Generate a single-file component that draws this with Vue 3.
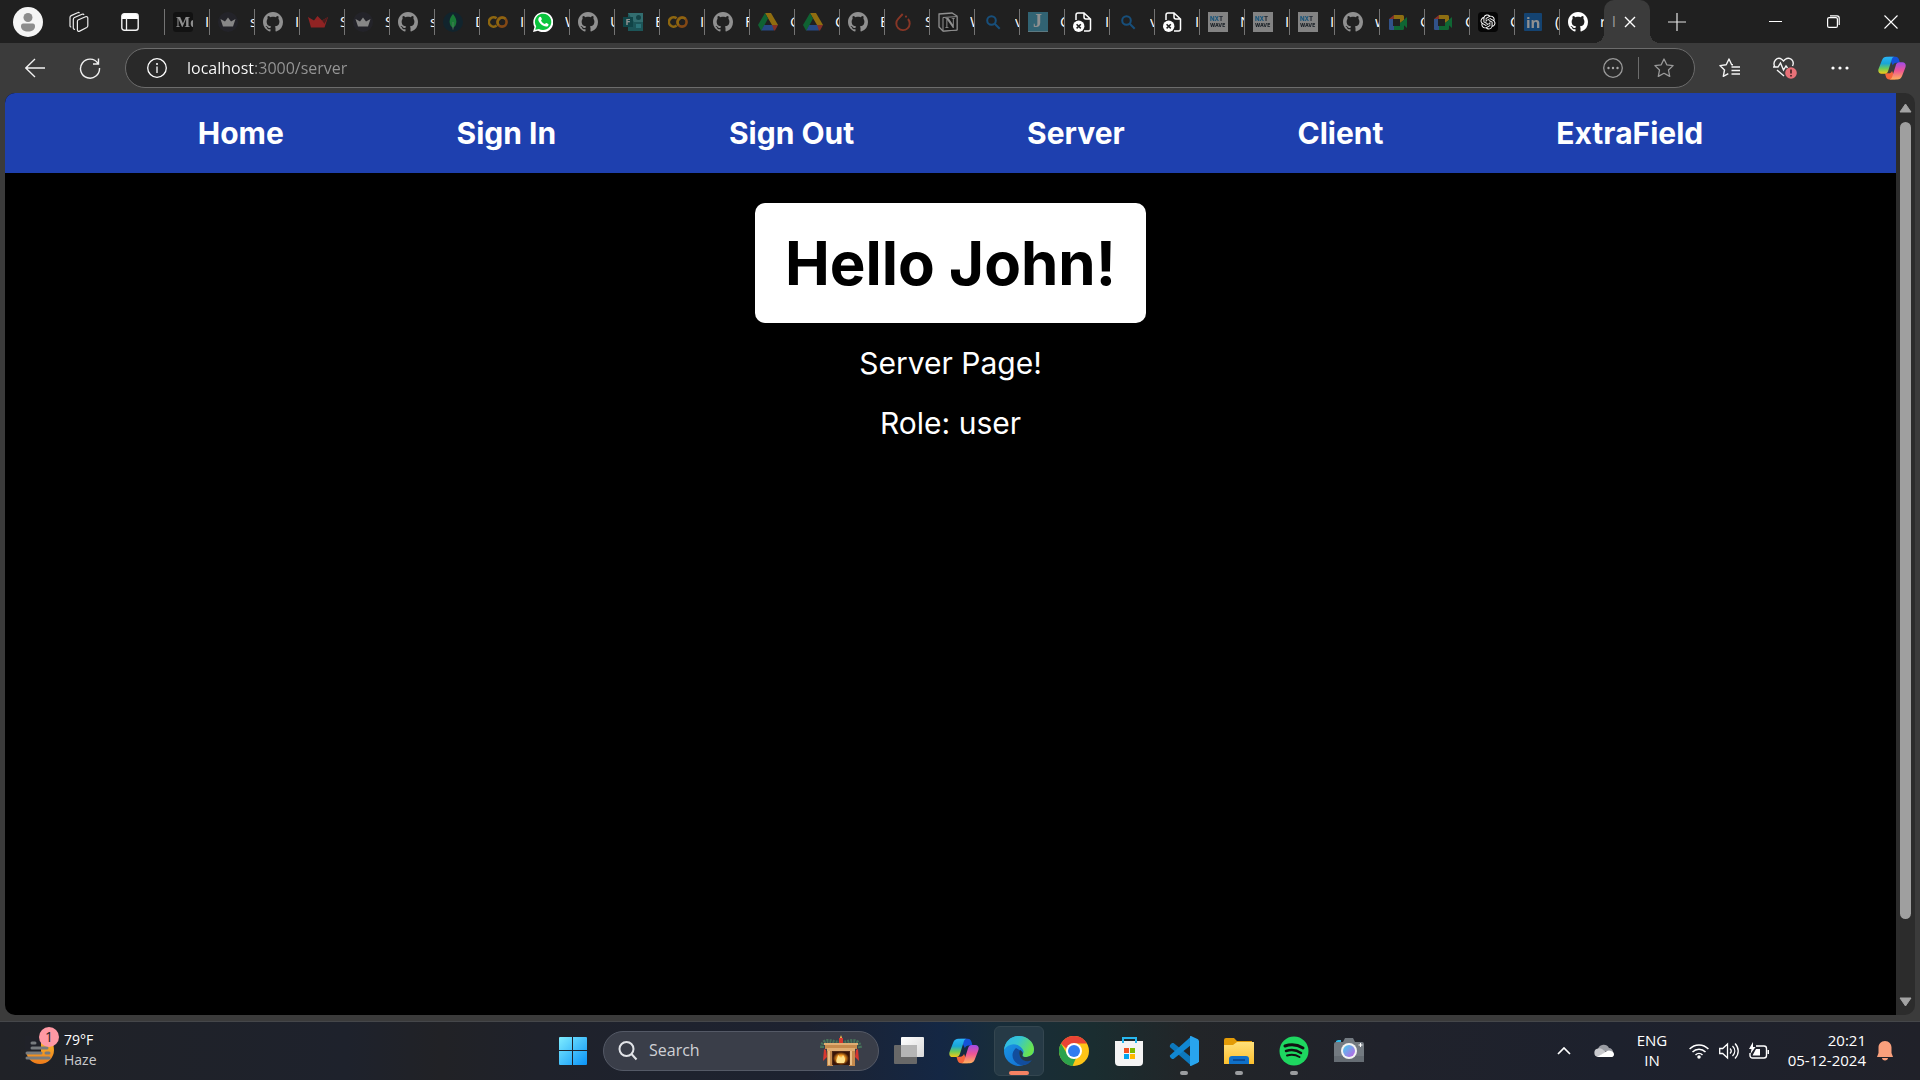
<script setup>
import { ref } from 'vue'

const tabs = [
  ['medium', 'Introduction'], ['crown', 'search'], ['github', 'Issues'], ['crown-red', 'Shop'],
  ['crown', 'Store'], ['github', 'server'], ['mongo', 'Data'], ['colab', 'Intro.ipynb'],
  ['whatsapp', 'WhatsApp'], ['github', 'User'], ['forms', 'Entry'], ['colab', 'Input.ipynb'],
  ['github', 'Forks'], ['drive', 'Google Drive'], ['drive', 'Course'], ['github', 'Explore'],
  ['pytorch', 'Start'], ['notion', 'Work'], ['lens', 'vue'], ['jay', 'Codes'],
  ['broken', 'Invalid'], ['lens', 'video'], ['broken', 'Invalid'], ['nxt', 'NxtWave'],
  ['nxt', 'Intro'], ['nxt', 'Intro'], ['github', 'web'], ['meet', 'Google Meet'],
  ['meet', 'Call'], ['openai', 'ChatGPT'], ['linkedin', '(1) LinkedIn'], ['github', 'repo']
].map(([icon, title], i) => ({ icon, title, awake: ['whatsapp', 'broken', 'openai'].includes(icon) || i === 31 }))

const links = ['Home', 'Sign In', 'Sign Out', 'Server', 'Client', 'ExtraField']

const apps = [
  { id: 'taskview', name: 'Task View' },
  { id: 'copilot', name: 'Copilot' },
  { id: 'edge', name: 'Microsoft Edge', active: true },
  { id: 'chrome', name: 'Google Chrome' },
  { id: 'store', name: 'Microsoft Store' },
  { id: 'vscode', name: 'Visual Studio Code', running: true },
  { id: 'folder', name: 'File Explorer', running: true },
  { id: 'spotify', name: 'Spotify', running: true },
  { id: 'camera', name: 'Camera' }
]

const address = ref('localhost:3000/server')
</script>

<template>
  <svg class="sprite" aria-hidden="true">
    <defs>
      <linearGradient id="g-win" x1="0" y1="0" x2="1" y2="1"><stop offset="0" stop-color="#7fedff" /><stop offset="1" stop-color="#0a93f7" /></linearGradient>
      <linearGradient id="g-cp1" x1="0" y1="0" x2="0" y2="1"><stop offset="0" stop-color="#2bb4f6" /><stop offset=".4" stop-color="#19a5d6" /><stop offset=".7" stop-color="#6ecb57" /><stop offset="1" stop-color="#f5c916" /></linearGradient>
      <linearGradient id="g-cp2" x1="0" y1="0" x2="0" y2="1"><stop offset="0" stop-color="#a04be8" /><stop offset=".5" stop-color="#ee5593" /><stop offset="1" stop-color="#ffb05c" /></linearGradient>
      <linearGradient id="g-edge1" x1="0" y1="0" x2="1" y2=".4"><stop offset="0" stop-color="#2fb5ea" /><stop offset=".5" stop-color="#35c5d2" /><stop offset="1" stop-color="#69e34f" /></linearGradient>
      <linearGradient id="g-edge2" x1="0" y1="0" x2="1" y2="1"><stop offset="0" stop-color="#1c9de6" /><stop offset="1" stop-color="#1065cf" /></linearGradient>
      <linearGradient id="g-task" x1="0" y1="0" x2="1" y2="1"><stop offset="0" stop-color="#fff" /><stop offset="1" stop-color="#d9d9d9" /></linearGradient>
      <linearGradient id="g-fold" x1="0" y1="0" x2="0" y2="1"><stop offset="0" stop-color="#ffe07a" /><stop offset="1" stop-color="#fdc02d" /></linearGradient>
      <linearGradient id="g-lens" x1="0" y1="0" x2="1" y2="1"><stop offset="0" stop-color="#42d0ef" /><stop offset="1" stop-color="#c35ee4" /></linearGradient>
      <linearGradient id="g-sun" x1="0" y1="0" x2="0" y2="1"><stop offset="0" stop-color="#fbc22d" /><stop offset="1" stop-color="#ee7b1b" /></linearGradient>
      <radialGradient id="g-fire"><stop offset="0" stop-color="#fff0a0" /><stop offset=".5" stop-color="#f79a20" /><stop offset="1" stop-color="#3a1507" /></radialGradient>
    </defs>

    <symbol id="github" viewBox="0 0 16 16"><path fill="#fff" d="M8 0C3.58 0 0 3.58 0 8c0 3.54 2.29 6.53 5.47 7.59.4.07.55-.17.55-.38 0-.19-.01-.82-.01-1.49-2.01.37-2.53-.49-2.69-.94-.09-.23-.48-.94-.82-1.13-.28-.15-.68-.52-.01-.53.63-.01 1.08.58 1.23.82.72 1.21 1.87.87 2.33.66.07-.52.28-.87.51-1.07-1.78-.2-3.64-.89-3.64-3.95 0-.87.31-1.59.82-2.15-.08-.2-.36-1.02.08-2.12 0 0 .67-.21 2.2.82.64-.18 1.32-.27 2-.27s1.36.09 2 .27c1.53-1.04 2.2-.82 2.2-.82.44 1.1.16 1.92.08 2.12.51.56.82 1.27.82 2.15 0 3.07-1.87 3.75-3.65 3.95.29.25.54.73.54 1.48 0 1.07-.01 1.93-.01 2.2 0 .21.15.46.55.38A8.01 8.01 0 0 0 16 8c0-4.42-3.58-8-8-8z" /></symbol>
    <symbol id="medium" viewBox="0 0 20 20"><rect width="20" height="20" rx="3" fill="#050505" /><text x="3" y="15" font-family="Liberation Serif, serif" font-weight="700" font-size="15" fill="#fff">Me</text></symbol>
    <symbol id="crown" viewBox="0 0 20 20"><circle cx="10" cy="10" r="10" fill="#272732" /><path fill="#eee" d="M2.500 7l4.500 2.500L10 5.500l3 4L17.500 7l-2.500 7.500H5z" /></symbol>
    <symbol id="crown-red" viewBox="0 0 20 20"><path fill="#ff2727" d="M0 5l6 3.500L9.500 4 14 8.500 20 5l-3.500 10.500H3z" /><path fill="#7a1c1c" d="M14 8.500L20 5l-3.500 7z" /></symbol>
    <symbol id="mongo" viewBox="0 0 20 20"><circle cx="10" cy="10" r="10" fill="#04283a" /><path fill="#13d14d" d="M10 2c1 1.500 3.400 4 3.400 7.500 0 3-1.400 5.200-3.400 6.500-2-1.300-3.400-3.500-3.400-6.500C6.600 6 9 3.500 10 2z" /><path stroke="#a8ddb9" stroke-width=".7" d="M10 10v7.500" /></symbol>
    <symbol id="colab" viewBox="0 0 20 20"><g fill="none" stroke-width="2.600"><path stroke="#f9ab00" d="M8.600 6.300a4.700 4.700 0 1 0 0 7.300" /><circle cx="14" cy="10" r="4.600" stroke="#e8710a" /><path stroke="#f9ab00" d="M10.600 13.200a4.700 4.700 0 0 1 6.800-6.400" /></g></symbol>
    <symbol id="whatsapp" viewBox="0 0 20 20"><path fill="#fff" d="M0 20l1.500-5A10 10 0 1 1 5 18.700z" /><path fill="#09c43c" d="M2.200 17.800l1-3.500a8.200 8.200 0 1 1 2.700 2.600z" /><path fill="#fff" d="M6.500 5c.7-.6 1.500-.2 1.700.4l.7 1.700c.1.500-.7 1.100-.9 1.500.9 1.800 2.100 2.900 3.900 3.500.5-.4.900-1.200 1.500-1.100l1.900.9c.6.500 0 2-1 2.500C10.700 15.600 5 10.500 5.300 7.300 5.400 6.300 5.800 5.500 6.500 5z" /></symbol>
    <symbol id="forms" viewBox="0 0 20 20"><path fill="#198b91" d="M5 1h15v18H5z" /><path fill="#44b9bd" d="M5 1h15v9H11z" /><circle cx="15.500" cy="5.500" r="2.500" fill="#09656b" /><path fill="#37c6d0" d="M13 12h5v4h-5z" /><rect y="5" width="10" height="10" fill="#02696e" /><text x="2.500" y="13.300" font-family="Open Sans, sans-serif" font-weight="700" font-size="9" fill="#fff">F</text></symbol>
    <symbol id="drive" viewBox="0 0 20 18"><path fill="#ffba00" d="M7 0h6l7 12h-6z" /><path fill="#00a344" d="M7 0l3 5.500L3.300 18 0 12z" /><path fill="#2c73e8" d="M3.300 17.500L6.300 12h10l-.5 5.500z" /><path fill="#e8412f" d="M14 12h6l-3 5.500h-1z" /></symbol>
    <symbol id="pytorch" viewBox="0 0 20 20"><path fill="none" stroke="#ee4c2c" stroke-width="1.900" d="M9.700 2L5.200 6.800a6.700 6.700 0 1 0 9.800.2" /><circle cx="13" cy="4.600" r="1.100" fill="#ee4c2c" /></symbol>
    <symbol id="notion" viewBox="0 0 20 20"><path fill="#222" stroke="#fff" stroke-width="1.300" d="M1 2l13-1 5 3v14l-14 1-4-4z" /><path fill="#111" stroke="#fff" stroke-width="1" d="M5 5.500l14-.9v13.500l-14 .9z" /><text x="7" y="16" font-family="Liberation Serif, serif" font-weight="700" font-size="14" fill="#fff">N</text></symbol>
    <symbol id="lens" viewBox="0 0 20 20"><g fill="none" stroke="#0f7ed6" stroke-width="2"><circle cx="8.500" cy="8.500" r="4.300" /><path d="M11.700 11.700l5 5" /></g></symbol>
    <symbol id="jay" viewBox="0 0 20 20"><rect width="20" height="20" fill="#42a6c5" /><path fill="#9ad2e2" d="M0 19h20v1H0z" /><text x="5" y="15" font-family="Liberation Serif, serif" font-weight="700" font-size="18" fill="#fff">J</text></symbol>
    <symbol id="broken" viewBox="0 0 20 20"><path fill="none" stroke="#fff" stroke-width="1.500" d="M3 8V3a2 2 0 0 1 2-2h6l6.500 6v10a2 2 0 0 1-2 2H11M11 1v4a2 2 0 0 0 2 2h4" /><circle cx="5.700" cy="14.300" r="5.700" fill="#fff" /><path stroke="#222" stroke-width="1.500" d="M3.600 12.200l4.200 4.200m0-4.200l-4.200 4.200" /></symbol>
    <symbol id="nxt" viewBox="0 0 20 20"><rect width="20" height="20" fill="#e6e6e6" /><g font-family="Inter, sans-serif" font-weight="800" font-size="6"><text x="2" y="9" fill="#168bd5">NX<tspan fill="#243246">T</tspan></text><text x="2" y="15" font-size="5" fill="#13202c">WAVE</text></g></symbol>
    <symbol id="meet" viewBox="0 0 20 20"><path fill="#ea4335" d="M1 7l5-4v4z" /><path fill="#4285f4" d="M1 7h4v7h5v4H2.500A1.500 1.500 0 0 1 1 16z" /><path fill="#fbbc04" d="M6 3h8.500A1.500 1.500 0 0 1 16 4.500V8l-4 3V7H6z" /><path fill="#00ac47" d="M6 14h6v-3l4-3v8.500a1.500 1.500 0 0 1-1.500 1.500H6zM13 10.500L19 5v11z" /></symbol>
    <symbol id="openai" viewBox="-4 -4 32 32"><rect x="-4" y="-4" width="32" height="32" rx="6" fill="#060606" /><path fill="#fff" d="M22.2819 9.8211a5.9847 5.9847 0 0 0-.5157-4.9108 6.0462 6.0462 0 0 0-6.5098-2.9A6.0651 6.0651 0 0 0 4.9807 4.1818a5.9847 5.9847 0 0 0-3.9977 2.9 6.0462 6.0462 0 0 0 .7427 7.0966 5.98 5.98 0 0 0 .511 4.9107 6.051 6.051 0 0 0 6.5146 2.9001A5.9847 5.9847 0 0 0 13.2599 24a6.0557 6.0557 0 0 0 5.7718-4.2058 5.9894 5.9894 0 0 0 3.9977-2.9001 6.0557 6.0557 0 0 0-.7475-7.0729zm-9.022 12.6081a4.4755 4.4755 0 0 1-2.8764-1.0408l.1419-.0804 4.7783-2.7582a.7948.7948 0 0 0 .3927-.6813v-6.7369l2.02 1.1686a.071.071 0 0 1 .038.052v5.5826a4.504 4.504 0 0 1-4.4945 4.4944zm-9.6607-4.1254a4.4708 4.4708 0 0 1-.5346-3.0137l.142.0852 4.783 2.7582a.7712.7712 0 0 0 .7806 0l5.8428-3.3685v2.3324a.0804.0804 0 0 1-.0332.0615L9.74 19.9502a4.4992 4.4992 0 0 1-6.1408-1.6464zM2.3408 7.8956a4.485 4.485 0 0 1 2.3655-1.9728V11.6a.7664.7664 0 0 0 .3879.6765l5.8144 3.3543-2.0201 1.1685a.0757.0757 0 0 1-.071 0l-4.8303-2.7865A4.504 4.504 0 0 1 2.3408 7.872zm16.5963 3.8558L13.1038 8.364 15.1192 7.2a.0757.0757 0 0 1 .071 0l4.8303 2.7913a4.4944 4.4944 0 0 1-.6765 8.1042v-5.6772a.79.79 0 0 0-.407-.667zm2.0107-3.0231l-.142-.0852-4.7735-2.7818a.7759.7759 0 0 0-.7854 0L9.409 9.2297V6.8974a.0662.0662 0 0 1 .0284-.0615l4.8303-2.7866a4.4992 4.4992 0 0 1 6.6802 4.66zM8.3065 12.863l-2.02-1.1638a.0804.0804 0 0 1-.038-.0567V6.0742a4.4992 4.4992 0 0 1 7.3757-3.4537l-.142.0805L8.704 5.459a.7948.7948 0 0 0-.3927.6813zm1.0976-2.3654l2.602-1.4998 2.6069 1.4998v2.9994l-2.5974 1.4997-2.6067-1.4997Z" /></symbol>
    <symbol id="linkedin" viewBox="0 0 20 20"><rect x="1" y="1" width="18" height="18" rx="1" fill="#0a66c2" /><text x="3" y="16" font-family="Open Sans, sans-serif" font-weight="700" font-size="15" fill="#fff">in</text></symbol>

    <symbol id="copilot" viewBox="0 0 32 32"><path fill="#1552d8" d="M12 3h8c2.500 0 3.500 1.500 4.200 4l.8 3h-4c-2 0-3.500 1-4 3z" /><path fill="#f4653b" d="M20 29h-7c-2.500 0-3.500-1.500-4.200-4L8 22h4c2 0 3.500-1 4-3z" /><path fill="url(#g-cp1)" d="M10 3h9c-2 0-2.800 1.500-3.300 3.200l-4 12.800c-.6 2-1.700 3.500-4.200 3.500H4C1 22.500-.3 20 .6 17L4.500 7C5.500 4.200 7.500 3 10 3z" /><path fill="url(#g-cp2)" d="M22 29h-9c2 0 2.800-1.500 3.300-3.200l4-12.800c.6-2 1.700-3.500 4.200-3.500H28c3 0 4.300 2.500 3.400 5.500L27.500 25c-1 2.800-3 4-5.500 4z" /></symbol>
    <symbol id="start" viewBox="0 0 30 30"><path fill="url(#g-win)" d="M2 1h12v13H1V2a1 1 0 0 1 1-1zm13 0h13a1 1 0 0 1 1 1v12H15zM1 15h13v14H2a1 1 0 0 1-1-1zm14 0h14v13a1 1 0 0 1-1 1H15z" /></symbol>
    <symbol id="taskview" viewBox="0 0 30 30"><rect y="9" width="23" height="19" rx="1" fill="#686868" /><rect x="7" y="1" width="23" height="20" rx="1" fill="url(#g-task)" /><path fill="#b5b5b5" d="M7 9h16v12H7z" /></symbol>
    <symbol id="edge" viewBox="0 0 30 30"><circle cx="15" cy="15" r="15" fill="url(#g-edge2)" /><path fill="#124d9d" d="M12 12c-7 6-3 17 7 17 4 0 7-2 9-5-5 2-10 1-12-3-1-2 0-5 1-6z" /><path fill="url(#g-edge1)" d="M0 14C1 5 7 0 15 0c8 0 15 6 15 13 0 5-3 8-8 8-2 0-4-1-3.500-2.500C20 17 20 15 18 12.500 13 6 4 7 0 14z" /><path fill="#263a46" d="M16 14c2.500 1.500 3.500 3 2.500 5-.8 2 4.500 3.500 9 0 2-1.500 3.500-4 3-2l-1 5.500c-.5 1-1.500 1.500-2.500 2-4 1.500-9 .5-11-3.500-1-2-1-5 0-7z" /></symbol>
    <symbol id="chrome" viewBox="0 0 30 30"><circle cx="15" cy="15" r="15" fill="#fdc417" /><path fill="#e94335" d="M2 7.500A15 15 0 0 1 28 7.500H15v12z" /><path fill="#2ca24c" d="M2 7.500L8.700 19c2 3 5 3.500 8.300 3L13.500 30A15 15 0 0 1 2 7.500z" /><circle cx="15" cy="15" r="8" fill="#fff" /><circle cx="15" cy="15" r="6" fill="#2f7cf0" /></symbol>
    <symbol id="store" viewBox="0 0 30 30"><path fill="#f4f4f4" d="M1 5h28v21a4 4 0 0 1-4 4H5a4 4 0 0 1-4-4z" /><path fill="none" stroke="#27b7ef" stroke-width="2" d="M9 7V2h13v5" /><path fill="#f25022" d="M10 12h5v5h-5z" /><path fill="#7fba00" d="M16 12h5v5h-5z" /><path fill="#00a4ef" d="M10 18h5v5h-5z" /><path fill="#ffb900" d="M16 18h5v5h-5z" /></symbol>
    <symbol id="vscode" viewBox="0 0 30 30"><path fill="#0d78bd" d="M1 9l2-2h1.500L22 21v8.500L.8 11z" /><path fill="#1187d2" d="M.8 19.500L22 .5V9L4.500 23H3l-2-2z" /><path fill="#28a4ee" d="M22 0l7 3.200 1 1.500v20.600l-1 1.500L22 30c-1 0-1-.5-1-1V1c0-.5 0-1 1-1z" /></symbol>
    <symbol id="folder" viewBox="0 0 30 30"><path fill="#e39b07" d="M0 4a2 2 0 0 1 2-2h8l3 3h15v10H0z" /><path fill="url(#g-fold)" d="M0 9h9l4-3h17v22H0z" /><path fill="#0f70c9" d="M5 28v-5a3 3 0 0 1 3-3h14a3 3 0 0 1 3 3v5z" /><path stroke="#083f86" stroke-width="1.500" d="M9 24h12" /></symbol>
    <symbol id="spotify" viewBox="0 0 30 30"><circle cx="15" cy="15" r="14.500" fill="#1ed760" /><g fill="none" stroke="#111" stroke-linecap="round"><path stroke-width="3" d="M6 10c6-2 13-1 18 2" /><path stroke-width="2.500" d="M7 15c5-1.500 11-.8 15 2" /><path stroke-width="2" d="M8 19.500c4-1.200 9-.7 12.500 1.500" /></g></symbol>
    <symbol id="camera" viewBox="0 0 30 30"><path fill="#2cb8e8" d="M2 7V5l2-1h3v3z" /><path fill="#737a81" d="M0 8a2 2 0 0 1 2-2h7l2-4h8l2 4h7a2 2 0 0 1 2 2v18H0z" /><path fill="#596067" d="M0 20h30v6H0z" opacity=".5" /><circle cx="15" cy="15" r="8" fill="#f3f3f3" /><circle cx="15" cy="15" r="6" fill="url(#g-lens)" /><path stroke="#fff" stroke-width="1" d="M26.500 7v4m-2-2h4" /></symbol>
  </svg>

  <div class="screen">
    <header class="tabstrip">
      <div class="strip-tools">
        <button class="tool" aria-label="Profile"><svg width="30" height="30" viewBox="0 0 30 30"><circle cx="15" cy="15" r="15" fill="#f5f5f5" /><circle cx="15" cy="10.500" r="4.500" fill="#8c8c8c" /><path fill="#8c8c8c" d="M8 19.500c0-3 1.500-3 3-3h8c1.500 0 3 0 3 3s-3 5-7 5-7-2-7-5z" /></svg></button>
        <button class="tool" aria-label="Workspaces"><svg width="22" height="22" viewBox="0 0 22 22" fill="none" stroke="#ececec" stroke-width="1.200" stroke-linejoin="round"><path d="M11 9l7.500-3.200c1.200-.5 2.300.1 2.300 1.300v7.600c0 .8-.4 1.400-1.100 1.800l-7 3.600c-1.200.6-2.300 0-2.300-1.300v-8.300c0-.7 0-1.200.6-1.500zM8 18.300c-1 .2-1.700-.4-1.700-1.400V8.500c0-.9.400-1.600 1.200-2L15 3.200c.9-.4 1.700 0 2 .7M4.300 16c-.8 0-1.300-.5-1.300-1.300V6.500c0-.9.400-1.500 1.200-1.900l6.300-2.900c.8-.4 1.600-.1 2 .5" /></svg></button>
        <button class="tool" aria-label="Tab actions"><svg width="18" height="18" viewBox="0 0 18 18"><rect x=".8" y=".8" width="16.400" height="16.400" rx="2.500" fill="none" stroke="#f2f2f2" stroke-width="1.400" /><path fill="#fff" d="M1 2.500L2.500 1h13L17 2.500V6H1z" /><path stroke="#f2f2f2" stroke-width="1.300" d="M5.500 5v12" /></svg></button>
      </div>
      <button v-for="(tab, i) in tabs" :key="i" class="tab" :class="{ awake: tab.awake }" :aria-label="tab.title">
        <svg class="favicon"><use :href="'#' + tab.icon" /></svg>
        <span class="tab-title">{{ tab.title[0] }}</span>
      </button>
      <div class="tab-active">
        <span class="tab-title current">l</span>
        <button class="close-tab" aria-label="Close tab"><svg width="12" height="12" viewBox="0 0 12 12" stroke="#fff" stroke-width="1.400"><path d="M1 1l10 10M11 1L1 11" /></svg></button>
      </div>
      <button class="new-tab" aria-label="New tab"><svg width="18" height="18" viewBox="0 0 18 18" stroke="#e4e4e4" stroke-width="1.200"><path d="M9 0v18M0 9h18" /></svg></button>
      <div class="window-controls">
        <button aria-label="Minimize"><svg width="13" height="13" viewBox="0 0 13 13" stroke="#fff"><path d="M0 6.500h13" /></svg></button>
        <button aria-label="Restore"><svg width="13" height="13" viewBox="0 0 13 13" fill="none" stroke="#fff" stroke-width="1.200"><rect x=".6" y="2.600" width="9.800" height="9.800" rx="1.500" /><path d="M3 .8h7a2.200 2.200 0 0 1 2.200 2.200v7" /></svg></button>
        <button aria-label="Close"><svg width="14" height="14" viewBox="0 0 14 14" stroke="#fff" stroke-width="1.100"><path d="M.5.5l13 13M13.500.5l-13 13" /></svg></button>
      </div>
    </header>

    <div class="toolbar">
      <button class="bar-button" aria-label="Back"><svg width="20" height="20" viewBox="0 0 20 20" fill="none" stroke="#f2f2f2" stroke-width="1.300"><path d="M20 10H.8M10 1L.8 10l9.200 9" /></svg></button>
      <button class="bar-button" aria-label="Refresh"><svg width="22" height="22" viewBox="0 0 22 22" fill="none" stroke="#f2f2f2" stroke-width="1.400"><path d="M19 6.500A9.500 9.500 0 1 0 20.500 11M19.500 1.500v5.500H14" /></svg></button>
      <div class="address">
        <button class="in-address" aria-label="View site information"><svg width="20" height="20" viewBox="0 0 20 20"><circle cx="10" cy="10" r="9.300" fill="none" stroke="#fff" stroke-width="1.300" /><path stroke="#fff" stroke-width="1.300" d="M10 8.500V15" /><circle cx="10" cy="6" r="1" fill="#fff" /></svg></button>
        <input v-model="address" class="url" type="text" aria-label="Address" spellcheck="false" />
        <button class="in-address" aria-label="More"><svg width="20" height="20" viewBox="0 0 20 20"><circle cx="10" cy="10" r="9.300" fill="none" stroke="#9a9a9a" stroke-width="1.300" /><g fill="#aaa"><circle cx="5.500" cy="10" r="1.200" /><circle cx="10" cy="10" r="1.200" /><circle cx="14.500" cy="10" r="1.200" /></g></svg></button>
        <span class="divider"></span>
        <button class="in-address" aria-label="Add to favourites"><svg width="20" height="20" viewBox="0 0 20 20" fill="none" stroke="#9a9a9a" stroke-width="1.300" stroke-linejoin="round"><path d="M10 1l2.800 5.800 6.300.8-4.600 4.400 1.200 6.400L10 15.300l-5.700 3.100L5.500 12 .9 7.600l6.300-.8z" /></svg></button>
      </div>
      <button class="bar-button" aria-label="Favourites"><svg width="21" height="20" viewBox="0 0 21 20" fill="none" stroke="#f4f4f4" stroke-width="1.400" stroke-linejoin="round"><path d="M14 6.800h-1.300L10 1 7.200 6.800.9 7.600 5.500 12l-1.200 6.400 5-2.700M12.500 9H21M12.500 12.500H21M12.500 16H21" /></svg></button>
      <button class="bar-button" aria-label="Browser essentials"><svg width="24" height="22" viewBox="0 0 24 22"><path fill="none" stroke="#f4f4f4" stroke-width="1.400" d="M2 10C-1 5 4-1 9 2.500l1.500 1.500L12 2.500C17-1 22 4 19.500 9M0 10h5l2.500-4 3 7L13 9l1.500 2M4 13l7 6" /><circle cx="18" cy="16" r="5.800" fill="#e87178" /><path stroke="#3b1e20" stroke-width="1.600" d="M18 12.500v4M18 18v1.500" /></svg></button>
      <button class="bar-button" aria-label="Settings and more"><svg width="18" height="4" viewBox="0 0 18 4" fill="#fff"><circle cx="2" cy="2" r="1.600" /><circle cx="9" cy="2" r="1.600" /><circle cx="16" cy="2" r="1.600" /></svg></button>
      <button class="bar-button copilot" aria-label="Copilot"><svg width="28" height="28"><use href="#copilot" /></svg></button>
    </div>

    <div class="viewport">
      <div class="page">
        <nav class="nav"><a v-for="link in links" :key="link" href="#">{{ link }}</a></nav>
        <main class="content">
          <h1>Hello John!</h1>
          <p>Server Page!</p>
          <p>Role: user</p>
        </main>
      </div>
      <div class="scrollbar" aria-hidden="true">
        <svg width="13" height="10" viewBox="0 0 13 10"><path fill="#a3a3a3" stroke="#a3a3a3" stroke-linejoin="round" d="M6.500 1L12 9H1z" /></svg>
        <div class="track"><div class="thumb"></div></div>
        <svg width="13" height="10" viewBox="0 0 13 10"><path fill="#a3a3a3" stroke="#a3a3a3" stroke-linejoin="round" d="M6.500 9L12 1H1z" /></svg>
      </div>
    </div>

    <footer class="taskbar">
      <button class="weather">
        <span class="weather-icon">
          <svg width="30" height="30" viewBox="0 0 30 30"><circle cx="15" cy="14" r="14" fill="url(#g-sun)" /><path fill="#202229" d="M0 0h16v16H0z" /><g stroke="#777b7e" stroke-width="3" stroke-linecap="round"><path d="M7 7h3M7 12h15M2 17h14M21 17h3M2 22h22" /></g></svg>
          <span class="badge">1</span>
        </span>
        <span class="weather-text"><span>79°F</span><span class="muted">Haze</span></span>
      </button>

      <div class="apps">
        <button class="app" aria-label="Start"><svg class="app-icon"><use href="#start" /></svg></button>
        <label class="search">
          <svg width="20" height="20" viewBox="0 0 20 20" fill="none" stroke="#e2e4e8" stroke-width="2"><circle cx="8.500" cy="8" r="7" /><path d="M13.500 13l5 5.500" /></svg>
          <input type="search" placeholder="Search" aria-label="Search" />
          <svg width="42" height="32" viewBox="0 0 42 32">
            <path fill="none" stroke="#47735b" stroke-width="4" stroke-dasharray="2 1" d="M2 13C2 5 8 5 14 7c5 1 9 1 13 0 6-2 12-2 13 6" />
            <path fill="#c58a4d" d="M5 10h32v4H5zM7 12h6v19H7zM29 12h6v19h-6z" /><path fill="#e0ad72" d="M4 8h34v2H4zM7 13h28v3H7z" /><path fill="#e9bd85" d="M8 16h2v14H8zM30 16h2v14h-2z" />
            <path fill="#4d2a18" d="M12 16h18v14H12z" /><path fill="url(#g-fire)" d="M13 17h16v13H13z" /><path fill="#ffe08a" d="M17 28c-2-3 1-5 1-8 3 2 2 4 3 4 1-1 1-3 2-4 2 3 3 5 1 8z" />
            <path fill="#d7372f" d="M19 3h4v5h-4zM4 14l2 1 1 7-4 4zM38 14l-2 1-1 7 4 4z" /><path fill="#ffc14d" d="M21 0l1 3h-2z" />
          </svg>
        </label>
        <button v-for="app in apps" :key="app.id" class="app" :class="{ active: app.active, running: app.running }" :aria-label="app.name">
          <svg class="app-icon"><use :href="'#' + app.id" /></svg>
        </button>
      </div>

      <div class="tray">
        <button class="tray-item chevron" aria-label="Show hidden icons"><svg width="14" height="8" viewBox="0 0 14 8" fill="none" stroke="#fff" stroke-width="1.700"><path d="M1 7l6-6 6 6" /></svg></button>
        <button class="tray-item cloud" aria-label="OneDrive"><svg width="20" height="14" viewBox="0 0 20 14"><path fill="#9a9ca3" d="M4 5a6 6 0 0 1 11-1c2 0 4 2 4 4l-9-1z" /><path fill="#c8c9cd" d="M4 4.500a4.500 4.500 0 0 1 4 .5l4 3-8 5A4.300 4.300 0 0 1 4 4.500z" /><path fill="#fff" d="M3 13l10-6a4 4 0 0 1 4 0c4 1 4 6 0 6H4z" /></svg></button>
        <button class="tray-item language"><span>ENG</span><span>IN</span></button>
        <button class="tray-item status" aria-label="Network, volume and battery">
          <svg width="20" height="16" viewBox="0 0 20 16" fill="none" stroke="#fff" stroke-width="1.500"><path d="M.6 6a13 13 0 0 1 18.800 0M3.500 9a9 9 0 0 1 13 0M6.500 12a5 5 0 0 1 7 0" /><circle cx="10" cy="14" r="1" fill="#fff" /></svg>
          <svg width="20" height="18" viewBox="0 0 20 18" fill="none" stroke="#fff" stroke-width="1.300"><path d="M.7 6.500h3L8.500 2v14l-4.800-4.500h-3zM11 6.500c1.500 1.500 1.500 3.500 0 5M13.500 4c3 3 3 7 0 10M16 1.500c4.300 4.500 4.300 10.500 0 15" /></svg>
          <svg width="20" height="18" viewBox="0 0 20 18"><path fill="none" stroke="#fff" stroke-width="1.400" d="M7 4h8a2.500 2.500 0 0 1 2.500 2.500v7A2.500 2.500 0 0 1 15 16H3.500A2.500 2.500 0 0 1 1 13.500V11" /><path fill="#fff" d="M18.500 8H20v4h-1.500zM7 7h4v6.500H3.500zM4 0L0 7h2.500L1.500 12 6.500 5H4z" /></svg>
        </button>
        <button class="tray-item clock"><span>20:21</span><span>05-12-2024</span></button>
        <button class="tray-item bell" aria-label="Notifications"><svg width="16" height="20" viewBox="0 0 16 20" fill="#f9a07c"><path d="M8 0c4 0 6.500 3 6.500 6.500V12l1.500 4H0l1.500-4V6.500C1.500 3 4 0 8 0zM5 17h6c0 1.500-1.500 2.500-3 2.500S5 18.500 5 17z" /></svg></button>
      </div>
    </footer>
  </div>
</template>

<style>
body {
  background: #3b3b3b;
}
</style>

<style scoped>
.sprite {
  position: absolute;
  width: 0;
  height: 0;
}

.screen {
  display: flex;
  flex-direction: column;
  min-height: 100vh;
  background: #3b3b3b;
  color: #fff;
  font-family: "Open Sans", "Noto Sans", sans-serif;
}

button {
  display: flex;
  align-items: center;
  justify-content: center;
  margin: 0;
  padding: 0;
  border: 0;
  background: none;
  color: inherit;
  font: inherit;
}

svg {
  flex: none;
  display: block;
}

/* Tab strip */
.tabstrip {
  display: flex;
  align-items: center;
  height: 43px;
  background: #202020;
}

.strip-tools {
  display: grid;
  grid-template-columns: 56px 44px 60px;
  padding-right: 4px;
}

.tab {
  flex: none;
  width: 45px;
  height: 26px;
  justify-content: flex-start;
  padding-left: 8px;
  border-left: 1px solid #747474;
}

.favicon {
  width: 20px;
  height: 20px;
  opacity: 0.5;
}

.awake .favicon {
  opacity: 1;
}

.tab-title {
  width: 4px;
  margin-left: 12px;
  padding-bottom: 2px;
  overflow: hidden;
  font-size: 15px;
  line-height: 20px;
  text-align: left;
}

.tab-active {
  position: relative;
  display: flex;
  align-items: center;
  justify-content: space-between;
  width: 46px;
  height: 43px;
  padding: 0 14px 0 8px;
  box-sizing: border-box;
  border-radius: 10px 10px 0 0;
  background: #3b3b3b;
}

.tab-active::before,
.tab-active::after {
  content: "";
  position: absolute;
  bottom: 0;
  width: 10px;
  height: 10px;
}

.tab-active::before {
  right: 100%;
  background: radial-gradient(circle at 0 0, transparent 10px, #3b3b3b 10px);
}

.tab-active::after {
  left: 100%;
  background: radial-gradient(circle at 100% 0, transparent 10px, #3b3b3b 10px);
}

.current {
  margin: 0;
  color: #9a9a9a;
}

.new-tab {
  width: 54px;
  height: 43px;
}

.window-controls {
  display: flex;
  margin-left: auto;
}

.window-controls button {
  width: 58px;
  height: 43px;
}

/* Toolbar */
.toolbar {
  display: flex;
  align-items: center;
  height: 50px;
  padding: 0 3px 0 7px;
}

.bar-button {
  width: 55px;
  height: 40px;
}

.copilot {
  width: 50px;
}

.address {
  display: flex;
  flex: 1;
  align-items: center;
  height: 40px;
  margin: 0 7px 0 8px;
  padding: 0 10px 0 11px;
  box-sizing: border-box;
  border: 1px solid #6c6c6c;
  border-radius: 20px;
  background: #292929;
}

.in-address {
  width: 40px;
  height: 36px;
}

.url {
  flex: 1;
  min-width: 0;
  height: 36px;
  margin: 0 10px 0 0;
  padding: 0 0 1px 10px;
  border: 0;
  outline: 0;
  background: linear-gradient(to right, #fff 77px, #969696 77px);
  background-clip: text;
  -webkit-text-fill-color: transparent;
  color: #fff;
  font: 16px "Open Sans", "Noto Sans", sans-serif;
}

.divider {
  width: 1px;
  height: 22px;
  margin: 0 5px;
  background: #6c6c6c;
}

/* Page */
.viewport {
  display: flex;
  flex: 1;
  margin: 0 5px 6px;
  border-radius: 10px;
  overflow: hidden;
}

.page {
  flex: 1;
  background: #000;
  font-family: Inter, sans-serif;
  font-size: 30px;
  line-height: 40px;
}

.nav {
  display: flex;
  justify-content: space-evenly;
  padding: 20px;
  background: #1e40af;
}

.nav a {
  color: #fff;
  font-weight: 700;
  text-decoration: none;
}

.content {
  display: flex;
  flex-direction: column;
  align-items: center;
  gap: 20px;
  padding: 30px;
}

.content h1 {
  margin: 0;
  padding: 30px;
  border-radius: 10px;
  background: #fff;
  color: #000;
  font-size: 60px;
  font-weight: 700;
  line-height: 60px;
}

.content p {
  margin: 0;
}

.scrollbar {
  display: flex;
  flex-direction: column;
  align-items: center;
  width: 19px;
  padding: 10px 0 8px;
  box-sizing: border-box;
  background: #2c2c2c;
}

.track {
  flex: 1;
  width: 11px;
  padding: 9px 0;
}

.thumb {
  height: 92%;
  border-radius: 6px;
  background: #9f9f9f;
}

/* Taskbar */
.taskbar {
  display: grid;
  grid-template-columns: 1fr auto 1fr;
  align-items: center;
  height: 59px;
  border-top: 1px solid #45474a;
  box-sizing: border-box;
  background: linear-gradient(to right, #202227, #1e222c 18%, #212226 23%, #1f222b 28%, #1d2230 42%, #142744 49%, #182d3a 52%, #1a2d30 57%, #222528 62%, #20222b 72%, #1d212d 84%, #202129);
}

.weather {
  justify-self: start;
  gap: 9px;
  padding-left: 25px;
}

.weather-icon {
  position: relative;
}

.badge {
  position: absolute;
  top: -9px;
  left: 14px;
  width: 20px;
  height: 20px;
  border-radius: 50%;
  background: #ff99a4;
  color: #222;
  font-size: 14px;
  line-height: 20px;
  text-align: center;
}

.weather-text {
  display: flex;
  flex-direction: column;
  align-items: flex-start;
  padding-bottom: 2px;
  font-size: 14px;
  line-height: 20px;
}

.muted {
  color: #c9cacc;
}

.apps {
  display: flex;
  align-items: center;
  gap: 5px;
  padding-left: 2px;
}

.app {
  position: relative;
  width: 50px;
  height: 50px;
  box-sizing: border-box;
  border-radius: 6px;
}

.app-icon {
  width: 30px;
  height: 30px;
}

.active {
  border: 1px solid #344650;
  background: #263a46;
}

.active::after,
.running::after {
  content: "";
  position: absolute;
  bottom: 1px;
  left: 50%;
  width: 8px;
  height: 4px;
  border-radius: 2px;
  background: #9b9da0;
  transform: translateX(-50%);
}

.active::after {
  bottom: 0;
  width: 20px;
  background: #f58263;
}

.search {
  display: flex;
  align-items: center;
  width: 276px;
  height: 40px;
  padding: 0 16px 0 14px;
  box-sizing: border-box;
  border: 1px solid #545966;
  border-radius: 20px;
  background: #3a3e49;
}

.search input {
  flex: 1;
  min-width: 0;
  margin: 0;
  padding: 0 0 2px 11px;
  border: 0;
  outline: 0;
  background: none;
  color: #fff;
  font: 16px "Open Sans", "Noto Sans", sans-serif;
}

.search input::placeholder {
  color: #cfd1d6;
}

.tray {
  display: flex;
  align-items: center;
  justify-self: end;
  padding-right: 16px;
}

.tray-item {
  height: 50px;
  font-size: 15px;
  line-height: 20px;
}

.chevron,
.cloud {
  width: 40px;
}

.language,
.clock {
  flex-direction: column;
  padding-bottom: 2px;
}

.language {
  width: 56px;
}

.status {
  gap: 10px;
  padding: 0 9px;
}

.clock {
  width: 88px;
  align-items: flex-end;
}

.bell {
  width: 38px;
}
</style>
